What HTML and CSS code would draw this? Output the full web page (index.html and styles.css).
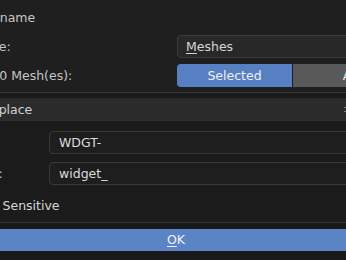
FILE: index.html
```html
<!DOCTYPE html>
<html>
<head>
<meta charset="utf-8">
<link rel="stylesheet" href="styles.css">
</head>
<body>
<div class="dialog">
  <div class="title">Batch Rename</div>
  <div class="row row-type">
    <span class="label">Data Type:</span>
    <div class="menu"><span class="ul">M</span>eshes</div>
  </div>
  <div class="row row-src">
    <span class="label">Rename 0 Mesh(es):</span>
    <div class="radio">
      <div class="opt on">Selected</div>
      <div class="opt">All</div>
    </div>
  </div>
  <div class="sep"></div>
  <div class="box">
    <div class="action"><span class="action-text">Find/Replace</span><span class="grip"></span></div>
    <div class="frow frow-find">
      <span class="flabel">Find:</span>
      <div class="field">WDGT-</div>
    </div>
    <div class="frow frow-repl">
      <span class="flabel">Replace:</span>
      <div class="field">widget_</div>
    </div>
    <div class="check-row">
      <span class="check"></span>
      <span class="check-label">Case Sensitive</span>
    </div>
  </div>
  <div class="sep sep-bottom"></div>
  <div class="footer">
    <div class="ok"><span class="ul">O</span>K</div>
  </div>
</div>
</body>
</html>
```

FILE: styles.css
```css
html, body {
  margin: 0;
  padding: 0;
}
body {
  width: 346px;
  height: 260px;
  overflow: hidden;
  background: #1f1f1f;
  font-family: "DejaVu Sans", sans-serif;
  font-size: 12.5px;
  color: #cfcfcf;
}
.dialog {
  margin-left: -64px;
  width: 464px;
  padding: 6px 8px 0 8px;
}
.title {
  height: 22px;
  line-height: 24px;
  color: #c6c6c6;
}
.row {
  display: flex;
  align-items: center;
  height: 23px;
}
.row-type {
  margin-top: 7px;
}
.row-src {
  margin-top: 6px;
}
.label {
  flex: 0 0 233px;
  color: #c6c6c6;
}
.menu {
  flex: 1;
  box-sizing: border-box;
  height: 23px;
  line-height: 21px;
  padding-left: 8px;
  background: #282828;
  border: 1px solid #3a3a3a;
  border-radius: 4px;
  color: #d6d6d6;
}
.ul {
  text-decoration: underline;
  text-underline-offset: 2px;
}
.radio {
  flex: 1;
  display: flex;
  height: 23px;
  border-radius: 4px;
  overflow: hidden;
  background: #1c1c1c;
  gap: 1px;
}
.opt {
  flex: 1;
  text-align: center;
  line-height: 23px;
  background: #595959;
  color: #e6e6e6;
}
.opt.on {
  background: #5680c2;
  color: #f0f0f0;
}
.sep {
  height: 1px;
  background: #363636;
  margin: 5px -8px 0 -8px;
}
.box {
  margin: 0 -8px;
  padding: 5px 8px 0 13px;
  background: #1b1b1b;
}
.action {
  display: flex;
  align-items: center;
  height: 23px;
  background: #2b2b2b;
  margin-left: -5px;
  padding-left: 9px;
  color: #d2d2d2;
  border-bottom: 1px solid #303030;
  box-sizing: border-box;
}
.grip {
  margin-left: auto;
  margin-right: 62px;
  width: 2px;
  height: 3px;
  border-top: 1px solid #7a7a7a;
  border-bottom: 1px solid #7a7a7a;
}
.frow {
  display: flex;
  align-items: center;
  height: 23px;
}
.frow-find {
  margin-top: 10px;
}
.frow-repl {
  margin-top: 8px;
}
.flabel {
  flex: 0 0 100px;
  color: #c6c6c6;
}
.field {
  flex: 1;
  box-sizing: border-box;
  height: 23px;
  line-height: 21px;
  padding-left: 9px;
  background: #1e1e1e;
  border: 1px solid #393939;
  border-radius: 4px;
  color: #dcdcdc;
}
.check-row {
  display: flex;
  align-items: center;
  height: 22px;
  margin-top: 9px;
  margin-left: -5px;
  padding-bottom: 6px;
}
.check {
  flex: 0 0 14px;
  height: 14px;
  margin-right: 10px;
  background: #545454;
  border-radius: 3px;
}
.check-label {
  color: #d6d6d6;
}
.sep-bottom {
  margin-top: 0;
}
.footer {
  margin: 0 -8px;
  padding: 6px 0 20px 0;
  background: #1a1a1a;
}
.ok {
  height: 22px;
  line-height: 22px;
  text-align: center;
  background: #5a84c6;
  color: #f2f2f2;
}
```
